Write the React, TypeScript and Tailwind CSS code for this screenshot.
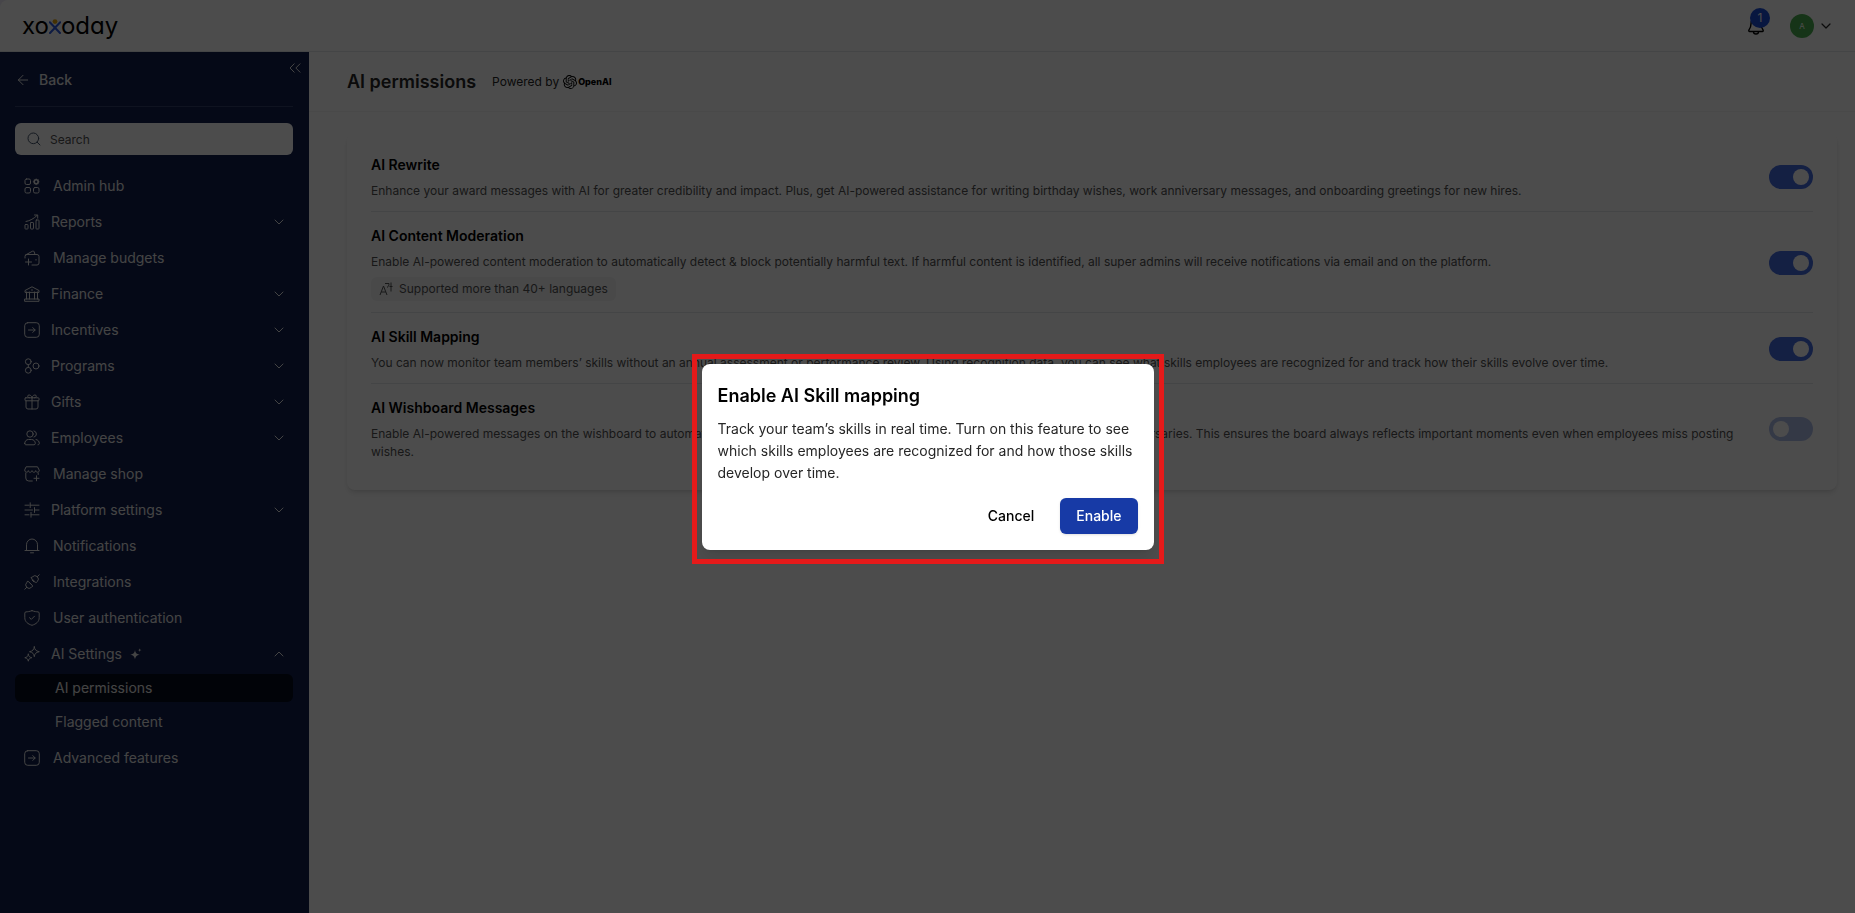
import { useState, type ReactNode } from 'react'
import { ChevronDown, ChevronUp, ArrowLeft, ChevronsLeft, Search } from 'lucide-react'
import { SiOpenai } from 'react-icons/si'

const icons: Record<string, ReactNode> = {
  hub: (
    <>
      <rect x="1" y="1" width="5.5" height="5.5" rx="1.5" />
      <rect x="1" y="9.5" width="5.5" height="5.5" rx="1.5" />
      <rect x="9.5" y="9.5" width="5.5" height="5.5" rx="1.5" />
      <circle cx="12.2" cy="3.8" r="2" strokeWidth="1.6" />
      <path d="M12.2.8v6M9.2 3.8h6M10.1 1.7l4.2 4.2M14.3 1.7l-4.2 4.2" strokeWidth=".7" strokeDasharray="1 4" />
    </>
  ),
  reports: (
    <>
      <rect x="1" y="10.5" width="3" height="4.5" rx=".6" />
      <rect x="6.5" y="8.5" width="3" height="6.5" rx=".6" />
      <rect x="12" y="6" width="3" height="9" rx=".6" />
      <path d="M2 7.5C6 6.8 10 4.5 13 1.5M10.5 1h3.2v3.2" />
    </>
  ),
  budgets: (
    <>
      <path d="M1 8V6.500a2 2 0 0 1 2-2h10a2 2 0 0 1 2 2V13a2 2 0 0 1-2 2H8" />
      <path d="M1.5 5 8.5 1.2a1.200 1.200 0 0 1 1.700.7l.8 2.600M4.500 9v6M1.500 12h6M12 9.500v.6" />
    </>
  ),
  finance: (
    <>
      <path d="M1 6V4.500L8 .8l7 3.700V6zM2.500 6v7M13.500 6v7M5.500 6v7M10.500 6v7M1 13h14v2.300H1z" />
      <path d="M8 3.500v1" />
    </>
  ),
  arrowBox: (
    <>
      <rect x=".7" y=".7" width="14.6" height="14.6" rx="3" />
      <path d="M4.5 8h6.5M8.8 5.6 11.2 8l-2.400 2.400" />
    </>
  ),
  programs: (
    <>
      <circle cx="4.3" cy="3.7" r="2.9" />
      <circle cx="4.3" cy="12.3" r="2.9" />
      <circle cx="12" cy="8" r="3" />
      <path d="M4.3 6.6v2.800" />
    </>
  ),
  gifts: (
    <>
      <rect x="1" y="3.8" width="14" height="3" rx=".8" />
      <path d="M2 6.8V13a2 2 0 0 0 2 2h8a2 2 0 0 0 2-2V6.8M8 3.8V15M8 3.8C8 1 4 0 3.7 2c-.1 1 .8 1.8 1.8 1.8M8 3.8C8 1 12 0 12.3 2c.1 1-.8 1.8-1.8 1.8" />
    </>
  ),
  employees: (
    <>
      <circle cx="6" cy="4" r="3.2" />
      <path d="M10 .9a3.2 3.2 0 0 1 0 6.2M.7 13.5c0-2.3 1.6-4 3.8-4h3c2.2 0 3.8 1.7 3.8 4 0 .8-.6 1.3-1.3 1.3H2c-.7 0-1.3-.5-1.3-1.3zM12 9.5c2 .3 3.3 1.9 3.3 4 0 .8-.6 1.3-1.3 1.3" />
    </>
  ),
  shop: (
    <>
      <path d="M2.5.8h11l1.8 3.5c0 2.5-3.4 2.5-3.6.3-.2 2.2-3.5 2.2-3.7 0-.2 2.2-3.5 2.2-3.7 0-.2 2.2-3.6 2.2-3.6-.3z" />
      <path d="M1.800 7v5a3 3 0 0 0 3 3h3.500M14.200 7v1.500M12.500 9.800v5M10 12.300h5" />
    </>
  ),
  sliders: <path d="M1 3.2h4M6.2.8v4.8M6.2 3.2H15M1 8h7.5M10.5 5.6v4.8M10.5 8H15M1 12.8h4M7 10.4v4.8M7 12.8h8" />,
  bell: <path d="M1 12.5h14M2.5 12.5V6.8a5.5 5.8 0 0 1 11 0v5.7M6.5 14.8h3" />,
  plug: (
    <>
      <path d="M.8 15.2 2.7 13.3M13.3 2.7 15.2.8M5.5 8.5l2 2M8 6l2 2" />
      <path d="M4 7.2 8.8 12l-1.300 1.300a3.300 3.300 0 0 1-4.800-4.800zM7.200 4l4.800 4.800 1.300-1.300a3.300 3.300 0 0 0-4.800-4.800z" />
    </>
  ),
  shield: (
    <>
      <path d="M8 .7c2.500.9 4.500 1.100 6 1.200.8 0 1.200.5 1.200 1.200v4.600c0 4-3 6.300-7.200 7.600C3.800 14 .8 11.700.8 7.700V3.100C.8 2.400 1.200 1.900 2 1.900 3.500 1.800 5.500 1.600 8 .7z" />
      <path d="m5.500 7.700 1.800 1.700 3.200-3.200" />
    </>
  ),
  sparkles: (
    <>
      <path d="M10.300.8c.4 3 1.500 4.200 5 4.900-3.500.7-4.600 2-5 5-.4-3-1.500-4.300-4.800-5 3.300-.7 4.400-1.900 4.800-4.900z" />
      <path d="M4.300 8.200c.3 2.200 1.200 3 3.500 3.500-2.300.5-3.200 1.400-3.500 3.500-.3-2.100-1.200-3-3.500-3.500 2.300-.5 3.200-1.300 3.500-3.500z" />
    </>
  ),
}

function Icon({ name }: { name: string }) {
  return (
    <svg
      className="h-4 w-4 shrink-0"
      viewBox="0 0 16 16"
      fill="none"
      stroke="currentColor"
      strokeLinecap="round"
      strokeLinejoin="round"
      aria-hidden="true"
    >
      {icons[name]}
    </svg>
  )
}

const menu = [
  { icon: 'hub', label: 'Admin hub' },
  { icon: 'reports', label: 'Reports', group: true },
  { icon: 'budgets', label: 'Manage budgets' },
  { icon: 'finance', label: 'Finance', group: true },
  { icon: 'arrowBox', label: 'Incentives', group: true },
  { icon: 'programs', label: 'Programs', group: true },
  { icon: 'gifts', label: 'Gifts', group: true },
  { icon: 'employees', label: 'Employees', group: true },
  { icon: 'shop', label: 'Manage shop' },
  { icon: 'sliders', label: 'Platform settings', group: true },
  { icon: 'bell', label: 'Notifications' },
  { icon: 'plug', label: 'Integrations' },
  { icon: 'shield', label: 'User authentication' },
]

const permissions = [
  {
    id: 'rewrite',
    title: 'AI Rewrite',
    text: 'Enhance your award messages with AI for greater credibility and impact. Plus, get AI-powered assistance for writing birthday wishes, work anniversary messages, and onboarding greetings for new hires.',
    on: true,
  },
  {
    id: 'moderation',
    title: 'AI Content Moderation',
    text: 'Enable AI-powered content moderation to automatically detect & block potentially harmful text. If harmful content is identified, all super admins will receive notifications via email and on the platform.',
    note: 'Supported more than 40+ languages',
    on: true,
  },
  {
    id: 'skills',
    title: 'AI Skill Mapping',
    text: 'You can now monitor team members’ skills without an annual assessment or performance review. Using recognition data, you can see what skills employees are recognized for and track how their skills evolve over time.',
    on: true,
  },
  {
    id: 'wishboard',
    title: 'AI Wishboard Messages',
    text: 'Enable AI-powered messages on the wishboard to automatically add thoughtful wishes for birthdays and for key employee service anniversaries. This ensures the board always reflects important moments even when employees miss posting wishes.',
    on: false,
  },
]

function Logo() {
  return (
    <a
      href="#"
      aria-label="xoxoday"
      className="flex items-baseline text-2xl leading-none text-black [font-feature-settings:'cv11']"
    >
      <span>xo</span>
      <svg className="h-4 w-3" viewBox="0 0 12 16" fill="none" aria-hidden="true">
        <path d="M.8 4.200 11 15M11.200 4.200 1 15" stroke="#2f5be0" strokeWidth="2" strokeLinecap="round" />
        <circle cx="6" cy="3.600" r="2.400" fill="#e8a60c" />
      </svg>
      <span>oday</span>
    </a>
  )
}

function Header() {
  return (
    <header className="flex h-13 shrink-0 items-center justify-between rounded-tl-lg border-b border-gray-200 bg-white pr-[21px] pl-[22px]">
      <Logo />
      <div className="flex items-center gap-6">
        <button type="button" aria-label="Notifications" className="relative text-black">
          <svg className="h-5 w-5" viewBox="0 0 20 20" fill="none" stroke="currentColor" strokeWidth="1.4" strokeLinejoin="round">
            <path d="M10 2.500c-3.200 0-5 2.300-5 5.200 0 3.300-.8 4.500-2 6.200-.5.800-.2 1.600.7 1.600h12.600c.9 0 1.200-.8.7-1.600-1.200-1.700-2-2.900-2-6.200 0-2.900-1.800-5.200-5-5.200z" />
            <path d="M7.500 15.800c0 1.300 1 2.200 2.500 2.200s2.500-.9 2.500-2.200" />
          </svg>
          <span className="absolute -top-2 left-1 flex h-5 w-5 items-center justify-center rounded-full bg-[#1d4ed8] text-xs text-white">
            1
          </span>
        </button>
        <button type="button" className="flex items-center gap-1 text-neutral-800">
          <span className="flex h-6 w-6 items-center justify-center rounded-full bg-[#4caf50] text-[8px] text-white">A</span>
          <ChevronDown className="h-4 w-4" strokeWidth={1.8} />
        </button>
      </div>
    </header>
  )
}

function Sidebar() {
  return (
    <aside className="relative w-[309px] shrink-0 bg-[#111e4d] pt-3 pr-4 pl-[15px] text-[#e5e5e5]">
      <button type="button" aria-label="Collapse menu" className="absolute top-1.5 right-1">
        <ChevronsLeft className="h-5 w-5" strokeWidth={1.2} />
      </button>
      <a href="#" className="flex h-8 items-center gap-2 text-sm font-medium">
        <ArrowLeft className="h-4 w-4" strokeWidth={1.5} />
        Back
      </a>
      <hr className="mt-2.5 border-[#35416b]" />
      <label className="mt-4 flex h-8 items-center gap-2 rounded-md bg-white px-[11px] text-slate-600">
        <Search className="h-4 w-4" strokeWidth={1.5} />
        <input
          type="search"
          aria-label="Search"
          placeholder="Search"
          className="h-8 min-w-0 flex-1 text-xs outline-none placeholder:text-neutral-600"
        />
      </label>
      <nav className="mt-[13px] text-sm">
        <ul>
          {menu.map((item) => (
            <li key={item.label}>
              {item.group ? (
                <button type="button" className="flex h-9 w-full items-center gap-[11px] pr-1.5 pl-[9px]">
                  <Icon name={item.icon} />
                  <span className="flex-1 text-left">{item.label}</span>
                  <ChevronDown className="h-4 w-4" strokeWidth={1.5} />
                </button>
              ) : (
                <a href="#" className="flex h-9 items-center gap-[13px] pl-[9px]">
                  <Icon name={item.icon} />
                  {item.label}
                </a>
              )}
            </li>
          ))}
          <li>
            <button type="button" className="flex h-9 w-full items-center gap-[11px] pr-1.5 pl-[9px]" aria-expanded="true">
              <Icon name="sparkles" />
              <span className="flex flex-1 items-center gap-2 text-left">
                AI Settings
                <svg className="h-3 w-3" viewBox="0 0 12 12" fill="currentColor" aria-hidden="true">
                  <path d="M5 2c.5 3 1.400 4 4.800 4.700C6.400 7.400 5.500 8.500 5 11.500 4.500 8.500 3.600 7.400.2 6.700 3.600 6 4.500 5 5 2z" />
                  <path d="M9.700.2c.2 1.200.6 1.600 2 1.900-1.400.3-1.800.7-2 1.900-.2-1.200-.6-1.600-2-1.900 1.400-.3 1.800-.7 2-1.900z" />
                </svg>
              </span>
              <ChevronUp className="h-4 w-4" strokeWidth={1.5} />
            </button>
            <ul className="mt-0.5 flex flex-col gap-1.5">
              <li>
                <a href="#" className="flex h-7 items-center rounded-md bg-[#060b1c] px-10" aria-current="page">
                  AI permissions
                </a>
              </li>
              <li>
                <a href="#" className="flex h-7 items-center px-10">
                  Flagged content
                </a>
              </li>
            </ul>
          </li>
          <li>
            <a href="#" className="flex h-11 items-center gap-[13px] pl-[9px]">
              <Icon name="arrowBox" />
              Advanced features
            </a>
          </li>
        </ul>
      </nav>
    </aside>
  )
}

function PermissionRow({ item }: { item: (typeof permissions)[number] }) {
  const [on, setOn] = useState(item.on)

  return (
    <section className="flex items-center justify-between gap-8 border-b border-gray-200 pt-3 pb-[11px] last:border-b-0">
      <div>
        <label htmlFor={item.id} className="block text-sm leading-6 font-semibold text-black">
          {item.title}
        </label>
        <p className="mt-[5px] text-xs leading-[18px] text-neutral-600">{item.text}</p>
        {item.note && (
          <p className="mt-1.5 flex h-6 w-fit items-center gap-1.5 rounded-md bg-gray-100 px-2 text-xs text-neutral-600">
            <svg className="h-3.5 w-3.5" viewBox="0 0 14 14" fill="none" stroke="currentColor" aria-hidden="true">
              <path d="M1 13 4.500 4 8 13M2.200 10h4.600M6 1.500h4c0 2-.5 3-2 4M12 .5v9M10.500 4.500h3" />
            </svg>
            {item.note}
          </p>
        )}
      </div>
      <input
        id={item.id}
        type="checkbox"
        role="switch"
        checked={on}
        onChange={() => setOn(!on)}
        className="h-6 w-11 shrink-0 appearance-none rounded-full bg-[#b0bfea] p-1 before:block before:h-4 before:w-4 before:rounded-full before:bg-white checked:bg-[#456be0] checked:before:translate-x-5"
      />
    </section>
  )
}

function ConfirmDialog() {
  return (
    <div className="fixed inset-0 flex items-center justify-center bg-black/70">
      <div
        role="dialog"
        aria-modal="true"
        aria-labelledby="dialog-title"
        className="relative w-[452px] rounded-lg bg-white px-4 pt-[18px] pb-4 shadow-lg"
      >
        <div className="pointer-events-none absolute -inset-x-2.5 -top-2.5 -bottom-3.5 border-5 border-[#e51a1a]" />
        <h2 id="dialog-title" className="text-lg leading-7 font-semibold text-black">
          Enable AI Skill mapping
        </h2>
        <p className="mt-2 text-sm leading-[22px] text-neutral-800">
          Track your team’s skills in real time. Turn on this feature to see which skills employees are recognized for
          and how those skills develop over time.
        </p>
        <div className="mt-3.5 flex justify-end gap-2.5 text-sm font-medium">
          <button type="button" className="h-9 rounded-md px-4 text-black">
            Cancel
          </button>
          <button type="button" className="h-9 rounded-md bg-[#173aa6] px-4 text-white shadow-sm">
            Enable
          </button>
        </div>
      </div>
    </div>
  )
}

export default function App() {
  return (
    <div className="flex min-h-screen flex-col bg-[#eeeaf8] font-['Inter',sans-serif]">
      <Header />
      <div className="flex flex-1 bg-white">
        <Sidebar />
        <main className="flex-1">
          <div className="flex h-[60px] items-center gap-4 border-b border-gray-100 px-9.5">
            <h1 className="text-lg font-semibold text-neutral-800">AI permissions</h1>
            <p className="flex items-center gap-1 text-xs text-neutral-800">
              Powered by
              <span className="flex items-center text-[9px] font-extrabold text-black">
                <SiOpenai className="mr-px h-3.5 w-3.5" />
                OpenAI
              </span>
            </p>
          </div>
          <div className="mt-[21px] mr-[18px] ml-9.5 rounded-lg bg-white px-6 pt-2 pb-[18px] shadow-md">
            {permissions.map((item) => (
              <PermissionRow key={item.id} item={item} />
            ))}
          </div>
        </main>
      </div>
      <ConfirmDialog />
    </div>
  )
}
